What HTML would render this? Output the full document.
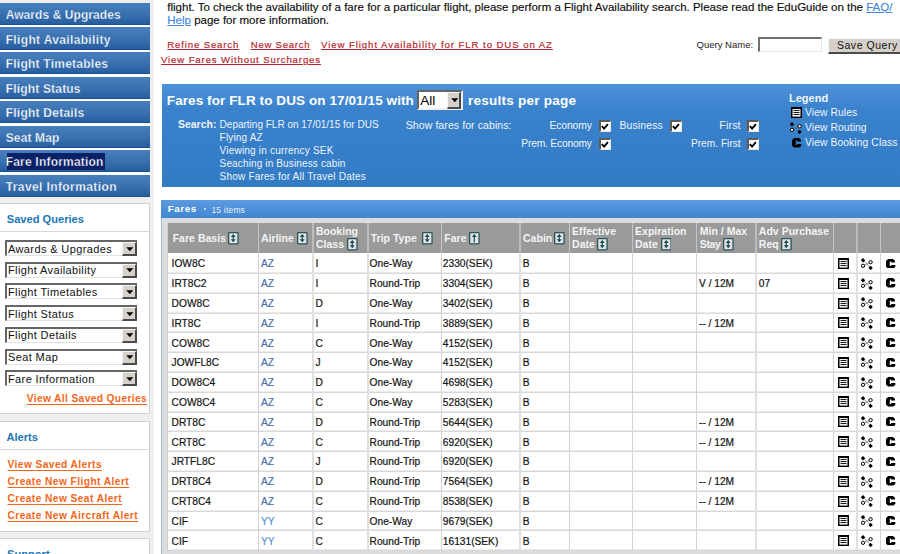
<!DOCTYPE html><html><head><meta charset="utf-8"><style>
*{margin:0;padding:0}
html,body{width:900px;height:554px;overflow:hidden;background:#fff}
body{position:relative;font-family:"Liberation Sans",sans-serif}
body>div{position:absolute}
.t{white-space:pre;line-height:1}
.t u{text-decoration-thickness:1px;text-underline-offset:1.5px}
.rl u{text-underline-offset:1px}
.rl{-webkit-text-stroke:0.2px #b3282d}
.t u.hl{color:#4287dc;text-underline-offset:1px;-webkit-text-stroke:0.15px #4287dc}
svg{display:block}
.sel{background:#fff;border-top:2px solid #666;border-left:2px solid #666;border-bottom:1px solid #e2e2e2;box-sizing:border-box}
.sel .st{position:absolute;left:1px;top:0.6px;font-size:11px;line-height:12px;color:#111;letter-spacing:0.38px;white-space:pre}
.sel .sb{position:absolute;right:0;top:0;width:14.8px;height:14px;background:#d5d1ca;border-style:solid;border-width:1px 2px 2px 1px;border-color:#f6f5f2 #4a4a4a #4a4a4a #f6f5f2;box-sizing:border-box}
.sel .sb i{position:absolute;left:2.5px;top:3.5px;width:0;height:0;border-left:3.5px solid transparent;border-right:3.5px solid transparent;border-top:4px solid #000}
.sel2{background:#fff;border-style:solid;border-width:2px;border-color:#666 #f0f0f0 #f0f0f0 #666;box-sizing:border-box}
.sel2 .st2{position:absolute;left:1px;top:1.5px;font-size:13.5px;line-height:15px;color:#000;white-space:pre}
.sel2 .sb2{position:absolute;right:0;top:0;width:14.7px;height:17.3px;background:#d5d1ca;border-style:solid;border-width:1px 2px 2px 1px;border-color:#f6f5f2 #4a4a4a #4a4a4a #f6f5f2;box-sizing:border-box}
.sel2 .sb2 i{position:absolute;left:2.8px;top:6px;width:0;height:0;border-left:3.3px solid transparent;border-right:3.3px solid transparent;border-top:3.9px solid #000}
.cb{width:12.2px;height:12px;background:#fff;border-style:solid;border-width:2px 1px 1px 2px;border-color:#5d5a55 #e8e6e0 #e8e6e0 #5d5a55;box-sizing:border-box}
.cb svg{position:absolute;left:0.2px;top:0.4px}
</style></head><body>
<div style="left:0px;top:0px;width:153.5px;height:554px;background:#efefef"></div>
<div style="left:0px;top:2.9px;width:150px;height:22.2px;background:linear-gradient(#4780bc,#3b73b2 45%,#255c9f);box-shadow:inset 0 -1px 0 #1c4f92"></div>
<div style="left:0px;top:25.1px;width:150px;height:2.36px;background:#fafcff"></div>
<div class="t " style="left:5.7px;top:9.0px;font-size:12px;color:#fff;font-weight:bold;letter-spacing:0.07px;-webkit-text-stroke:0.35px rgba(58,112,176,0.9)">Awards &amp; Upgrades</div>
<div style="left:0px;top:27.46px;width:150px;height:22.2px;background:linear-gradient(#4780bc,#3b73b2 45%,#255c9f);box-shadow:inset 0 -1px 0 #1c4f92"></div>
<div style="left:0px;top:49.66px;width:150px;height:2.36px;background:#fafcff"></div>
<div class="t " style="left:5.7px;top:33.56px;font-size:12px;color:#fff;font-weight:bold;letter-spacing:0.35px;-webkit-text-stroke:0.35px rgba(58,112,176,0.9)">Flight Availability</div>
<div style="left:0px;top:52.02px;width:150px;height:22.2px;background:linear-gradient(#4780bc,#3b73b2 45%,#255c9f);box-shadow:inset 0 -1px 0 #1c4f92"></div>
<div style="left:0px;top:74.22px;width:150px;height:2.36px;background:#fafcff"></div>
<div class="t " style="left:5.7px;top:58.12px;font-size:12px;color:#fff;font-weight:bold;letter-spacing:0.24px;-webkit-text-stroke:0.35px rgba(58,112,176,0.9)">Flight Timetables</div>
<div style="left:0px;top:76.58px;width:150px;height:22.2px;background:linear-gradient(#4780bc,#3b73b2 45%,#255c9f);box-shadow:inset 0 -1px 0 #1c4f92"></div>
<div style="left:0px;top:98.78px;width:150px;height:2.36px;background:#fafcff"></div>
<div class="t " style="left:5.7px;top:82.68px;font-size:12px;color:#fff;font-weight:bold;letter-spacing:0.18px;-webkit-text-stroke:0.35px rgba(58,112,176,0.9)">Flight Status</div>
<div style="left:0px;top:101.14px;width:150px;height:22.2px;background:linear-gradient(#4780bc,#3b73b2 45%,#255c9f);box-shadow:inset 0 -1px 0 #1c4f92"></div>
<div style="left:0px;top:123.34px;width:150px;height:2.36px;background:#fafcff"></div>
<div class="t " style="left:5.7px;top:107.24px;font-size:12px;color:#fff;font-weight:bold;letter-spacing:0.24px;-webkit-text-stroke:0.35px rgba(58,112,176,0.9)">Flight Details</div>
<div style="left:0px;top:125.7px;width:150px;height:22.2px;background:linear-gradient(#4780bc,#3b73b2 45%,#255c9f);box-shadow:inset 0 -1px 0 #1c4f92"></div>
<div style="left:0px;top:147.9px;width:150px;height:2.36px;background:#fafcff"></div>
<div class="t " style="left:5.7px;top:131.8px;font-size:12px;color:#fff;font-weight:bold;letter-spacing:0.15px;-webkit-text-stroke:0.35px rgba(58,112,176,0.9)">Seat Map</div>
<div style="left:0px;top:150.26px;width:150px;height:22.2px;background:linear-gradient(#4780bc,#3b73b2 45%,#255c9f);box-shadow:inset 0 -1px 0 #1c4f92"></div>
<div style="left:0px;top:172.46px;width:150px;height:2.36px;background:#fafcff"></div>
<div style="left:6.7px;top:152.96px;width:98.2px;height:16.9px;background:#0b2167"></div>
<div class="t " style="left:5.7px;top:156.36px;font-size:12px;color:#fff;font-weight:bold;letter-spacing:0.2px;-webkit-text-stroke:0.35px rgba(11,33,103,0.9)">Fare Information</div>
<div style="left:0px;top:174.82px;width:150px;height:22.2px;background:linear-gradient(#4780bc,#3b73b2 45%,#255c9f);box-shadow:inset 0 -1px 0 #1c4f92"></div>
<div class="t " style="left:5.7px;top:180.92px;font-size:12px;color:#fff;font-weight:bold;letter-spacing:0.4px;-webkit-text-stroke:0.35px rgba(58,112,176,0.9)">Travel Information</div>
<div style="left:0px;top:203px;width:149.5px;height:211px;background:#fff;border-top:1px solid #d0d0d0;border-right:1px solid #d0d0d0;border-bottom:1px solid #d0d0d0;box-sizing:border-box"></div>
<div class="t " style="left:6.8px;top:214px;font-size:11.1px;color:#1b76b6;font-weight:bold;">Saved Queries</div>
<div style="left:0px;top:231px;width:149px;height:1px;background:#d8d8d8"></div>
<div class="sel" style="left:5px;top:240.0px;width:132px;height:16px"><span class="st">Awards &amp; Upgrades</span><span class="sb"><svg width="8" height="5" viewBox="0 0 8 5" style="position:absolute;left:2.6px;top:3.6px"><path d="M0.3 0.2 H7.3 L3.8 4.2Z" fill="#000"/></svg></span></div>
<div class="sel" style="left:5px;top:261.7px;width:132px;height:16px"><span class="st">Flight Availability</span><span class="sb"><svg width="8" height="5" viewBox="0 0 8 5" style="position:absolute;left:2.6px;top:3.6px"><path d="M0.3 0.2 H7.3 L3.8 4.2Z" fill="#000"/></svg></span></div>
<div class="sel" style="left:5px;top:283.4px;width:132px;height:16px"><span class="st">Flight Timetables</span><span class="sb"><svg width="8" height="5" viewBox="0 0 8 5" style="position:absolute;left:2.6px;top:3.6px"><path d="M0.3 0.2 H7.3 L3.8 4.2Z" fill="#000"/></svg></span></div>
<div class="sel" style="left:5px;top:305.1px;width:132px;height:16px"><span class="st">Flight Status</span><span class="sb"><svg width="8" height="5" viewBox="0 0 8 5" style="position:absolute;left:2.6px;top:3.6px"><path d="M0.3 0.2 H7.3 L3.8 4.2Z" fill="#000"/></svg></span></div>
<div class="sel" style="left:5px;top:326.8px;width:132px;height:16px"><span class="st">Flight Details</span><span class="sb"><svg width="8" height="5" viewBox="0 0 8 5" style="position:absolute;left:2.6px;top:3.6px"><path d="M0.3 0.2 H7.3 L3.8 4.2Z" fill="#000"/></svg></span></div>
<div class="sel" style="left:5px;top:348.5px;width:132px;height:16px"><span class="st">Seat Map</span><span class="sb"><svg width="8" height="5" viewBox="0 0 8 5" style="position:absolute;left:2.6px;top:3.6px"><path d="M0.3 0.2 H7.3 L3.8 4.2Z" fill="#000"/></svg></span></div>
<div class="sel" style="left:5px;top:370.2px;width:132px;height:16px"><span class="st">Fare Information</span><span class="sb"><svg width="8" height="5" viewBox="0 0 8 5" style="position:absolute;left:2.6px;top:3.6px"><path d="M0.3 0.2 H7.3 L3.8 4.2Z" fill="#000"/></svg></span></div>
<div class="t " style="left:26.7px;top:394.2px;font-size:10.2px;color:#f4661b;font-weight:bold;letter-spacing:0.38px;"><u>View All Saved Queries</u></div>
<div style="left:0px;top:421.2px;width:149.5px;height:110.6px;background:#fff;border-top:1px solid #d0d0d0;border-right:1px solid #d0d0d0;border-bottom:1px solid #d0d0d0;box-sizing:border-box"></div>
<div class="t " style="left:6.5px;top:432px;font-size:11.1px;color:#1b76b6;font-weight:bold;">Alerts</div>
<div style="left:0px;top:449px;width:149px;height:1px;background:#d8d8d8"></div>
<div class="t " style="left:7.5px;top:459.8px;font-size:10.2px;color:#f4661b;font-weight:bold;letter-spacing:0.43px;"><u>View Saved Alerts</u></div>
<div class="t " style="left:7.5px;top:476.7px;font-size:10.2px;color:#f4661b;font-weight:bold;letter-spacing:0.43px;"><u>Create New Flight Alert</u></div>
<div class="t " style="left:7.5px;top:493.6px;font-size:10.2px;color:#f4661b;font-weight:bold;letter-spacing:0.43px;"><u>Create New Seat Alert</u></div>
<div class="t " style="left:7.5px;top:510.5px;font-size:10.2px;color:#f4661b;font-weight:bold;letter-spacing:0.43px;"><u>Create New Aircraft Alert</u></div>
<div style="left:0px;top:537.8px;width:149.5px;height:30px;background:#fff;border-top:1px solid #d0d0d0;border-right:1px solid #d0d0d0;box-sizing:border-box"></div>
<div class="t " style="left:7.1px;top:549px;font-size:11.1px;color:#1b76b6;font-weight:bold;">Support</div>
<div class="t " style="left:167.3px;top:1.6px;font-size:11.5px;color:#0d0d0d;-webkit-text-stroke:0.15px #0d0d0d">flight. To check the availability of a fare for a particular flight, please perform a Flight Availability search. Please read the EduGuide on the <u class="hl">FAQ/</u></div>
<div class="t " style="left:167.3px;top:15px;font-size:11.5px;color:#0d0d0d;-webkit-text-stroke:0.15px #0d0d0d"><u class="hl">Help</u> page for more information.</div>
<div class="t rl" style="left:167.3px;top:40px;font-size:9.6px;color:#b3282d;letter-spacing:0.85px;font-weight:500"><u>Refine Search</u></div>
<div class="t rl" style="left:250.8px;top:40px;font-size:9.6px;color:#b3282d;letter-spacing:0.72px;"><u>New Search</u></div>
<div class="t rl" style="left:321px;top:40px;font-size:9.6px;color:#b3282d;letter-spacing:0.93px;"><u>View Flight Availability for FLR to DUS on AZ</u></div>
<div class="t rl" style="left:161px;top:55px;font-size:9.6px;color:#b3282d;letter-spacing:0.87px;"><u>View Fares Without Surcharges</u></div>
<div class="t " style="left:696.6px;top:40.3px;font-size:9.5px;color:#222;">Query Name:</div>
<div style="left:757.8px;top:37.3px;width:64.5px;height:15.2px;background:#fff;border-style:solid;border-width:2px 1px 1px 2px;border-color:#707070 #e4e4e4 #e4e4e4 #707070;box-sizing:border-box"></div>
<div style="left:828.4px;top:38px;width:90px;height:15.7px;background:#d5d1ca;border-style:solid;border-width:1px 2px 2px 1px;border-color:#f8f8f8 #4a4a4a #4a4a4a #f8f8f8;box-sizing:border-box"></div>
<div class="t " style="left:836.9px;top:39.8px;font-size:10.5px;color:#111;letter-spacing:0.55px;">Save Query</div>
<div style="left:161.6px;top:83.9px;width:740px;height:102.9px;background:linear-gradient(#4d93db,#3b82cd 25%,#367ec8 60%,#337cc4)"></div>
<div class="t " style="left:166.8px;top:93.5px;font-size:13.5px;color:#fff;font-weight:bold;letter-spacing:0.09px;">Fares for FLR to DUS on 17/01/15 with</div>
<div class="sel2" style="left:417.3px;top:89.6px;width:46px;height:20.7px"><span class="st2">All</span><span class="sb2"><svg width="8" height="5" viewBox="0 0 8 5" style="position:absolute;left:2.9px;top:5.8px"><path d="M0.3 0.2 H7.3 L3.8 4.2Z" fill="#000"/></svg></span></div>
<div class="t " style="left:468px;top:93.5px;font-size:13.5px;color:#fff;font-weight:bold;letter-spacing:0.25px;">results per page</div>
<div class="t " style="left:177.9px;top:118.6px;font-size:10.5px;color:#eef4fb;font-weight:bold;">Search:</div>
<div class="t " style="left:219.6px;top:119.6px;font-size:10px;color:#eef4fb;">Departing FLR on 17/01/15 for DUS</div>
<div class="t " style="left:219.6px;top:132.7px;font-size:10px;color:#eef4fb;letter-spacing:0.18px;">Flying AZ</div>
<div class="t " style="left:219.6px;top:145.8px;font-size:10px;color:#eef4fb;letter-spacing:0.2px;">Viewing in currency SEK</div>
<div class="t " style="left:219.6px;top:158.9px;font-size:10px;color:#eef4fb;letter-spacing:0.14px;">Seaching in Business cabin</div>
<div class="t " style="left:219.6px;top:172.0px;font-size:10px;color:#eef4fb;letter-spacing:0.2px;">Show Fares for All Travel Dates</div>
<div class="t " style="left:405.7px;top:120.3px;font-size:10.6px;color:#eef4fb;letter-spacing:0.05px;">Show fares for cabins:</div>
<div class="t" style="right:308.3px;top:121.3px;font-size:10.4px;color:#eef4fb;letter-spacing:-0.15px;">Economy</div>
<div class="cb" style="left:598.9px;top:120.4px"><svg width="9" height="9" viewBox="0 0 9 9"><path d="M0.8 3.2 L3.1 5.6 L6.9 1.2" stroke="#000" stroke-width="1.9" fill="none"/></svg></div>
<div class="t " style="left:619.5px;top:121.3px;font-size:10.4px;color:#eef4fb;letter-spacing:0.15px;">Business</div>
<div class="cb" style="left:669.6px;top:120.4px"><svg width="9" height="9" viewBox="0 0 9 9"><path d="M0.8 3.2 L3.1 5.6 L6.9 1.2" stroke="#000" stroke-width="1.9" fill="none"/></svg></div>
<div class="t" style="right:159.3px;top:120.3px;font-size:10.6px;color:#eef4fb;letter-spacing:0.15px;">First</div>
<div class="cb" style="left:747.3px;top:120.4px"><svg width="9" height="9" viewBox="0 0 9 9"><path d="M0.8 3.2 L3.1 5.6 L6.9 1.2" stroke="#000" stroke-width="1.9" fill="none"/></svg></div>
<div class="t" style="right:308.3px;top:139.1px;font-size:10.3px;color:#eef4fb;letter-spacing:-0.22px;">Prem. Economy</div>
<div class="cb" style="left:598.9px;top:138.2px"><svg width="9" height="9" viewBox="0 0 9 9"><path d="M0.8 3.2 L3.1 5.6 L6.9 1.2" stroke="#000" stroke-width="1.9" fill="none"/></svg></div>
<div class="t" style="right:159.3px;top:139.1px;font-size:10.2px;color:#eef4fb;">Prem. First</div>
<div class="cb" style="left:747.3px;top:138.2px"><svg width="9" height="9" viewBox="0 0 9 9"><path d="M0.8 3.2 L3.1 5.6 L6.9 1.2" stroke="#000" stroke-width="1.9" fill="none"/></svg></div>
<div class="t " style="left:789px;top:93px;font-size:11px;color:#eef4fb;font-weight:bold;">Legend</div>
<div class="t " style="left:805px;top:108px;font-size:10.3px;color:#eef4fb;letter-spacing:0.1px;">View Rules</div>
<div class="t " style="left:805px;top:123px;font-size:10.3px;color:#eef4fb;letter-spacing:0.1px;">View Routing</div>
<div class="t " style="left:805px;top:138.3px;font-size:10.3px;color:#eef4fb;letter-spacing:0.1px;">View Booking Class</div>
<div style="left:161.3px;top:199.9px;width:740px;height:17.8px;background:linear-gradient(#5b9ae0,#3f86d2)"></div>
<div class="t " style="left:167.8px;top:204.1px;font-size:9.8px;color:#fff;font-weight:bold;letter-spacing:0.55px;">Fares</div>
<div style="left:204.3px;top:208.3px;width:2px;height:2px;background:#e8f0fa;border-radius:1px"></div>
<div class="t " style="left:211.4px;top:206.1px;font-size:8.4px;color:#e8f0fa;letter-spacing:0.25px;">15 items</div>
<div style="left:161.3px;top:217.7px;width:740px;height:340px;background:#dcdcdc;box-shadow:inset 1px 0 0 #9bbbe0"></div>
<div style="left:167.8px;top:223.2px;width:740px;height:29.6px;background:#9a9a9a"></div>
<div style="left:258px;top:223.2px;width:1px;height:29.6px;background:#c6c6c6"></div>
<div style="left:312px;top:223.2px;width:2px;height:29.6px;background:#bdbdbd"></div>
<div style="left:367px;top:223.2px;width:2px;height:29.6px;background:#bdbdbd"></div>
<div style="left:441px;top:223.2px;width:1px;height:29.6px;background:#c6c6c6"></div>
<div style="left:519px;top:223.2px;width:2px;height:29.6px;background:#bdbdbd"></div>
<div style="left:569px;top:223.2px;width:1px;height:29.6px;background:#c6c6c6"></div>
<div style="left:632px;top:223.2px;width:1px;height:29.6px;background:#c6c6c6"></div>
<div style="left:696px;top:223.2px;width:1px;height:29.6px;background:#c6c6c6"></div>
<div style="left:755px;top:223.2px;width:2px;height:29.6px;background:#bdbdbd"></div>
<div style="left:833px;top:223.2px;width:1px;height:29.6px;background:#c6c6c6"></div>
<div style="left:856px;top:223.2px;width:2px;height:29.6px;background:#bdbdbd"></div>
<div style="left:880px;top:223.2px;width:1px;height:29.6px;background:#c6c6c6"></div>
<div class="t " style="left:172.7px;top:232.7px;font-size:10.5px;color:#f4f4f4;font-weight:bold;letter-spacing:0.02px;">Fare Basis</div>
<div style="left:228.3px;top:232.0px;width:10.7px;height:12.5px"><svg width="10.7" height="12.5" viewBox="0 0 10.7 12.5"><rect x="0.65" y="0.65" width="9.4" height="11.2" rx="0.7" fill="#e2e2ea" stroke="#2b5656" stroke-width="1.3"/><path d="M5.25 1.9 L7.7 4.9 H5.85 V7.3 H7.7 L5.25 10.2 L2.8 7.3 H4.65 V4.9 H2.8 Z" fill="#184a4a"/></svg></div>
<div class="t " style="left:261px;top:232.7px;font-size:10.5px;color:#f4f4f4;font-weight:bold;letter-spacing:0.02px;">Airline</div>
<div style="left:297.0px;top:232.0px;width:10.7px;height:12.5px"><svg width="10.7" height="12.5" viewBox="0 0 10.7 12.5"><rect x="0.65" y="0.65" width="9.4" height="11.2" rx="0.7" fill="#e2e2ea" stroke="#2b5656" stroke-width="1.3"/><path d="M5.25 1.9 L7.7 4.9 H5.85 V7.3 H7.7 L5.25 10.2 L2.8 7.3 H4.65 V4.9 H2.8 Z" fill="#184a4a"/></svg></div>
<div class="t " style="left:315.9px;top:225.7px;font-size:10.5px;color:#f4f4f4;font-weight:bold;letter-spacing:0.02px;">Booking</div>
<div class="t " style="left:315.9px;top:238.7px;font-size:10.5px;color:#f4f4f4;font-weight:bold;letter-spacing:0.02px;">Class</div>
<div style="left:347.3px;top:238.3px;width:10.7px;height:12.5px"><svg width="10.7" height="12.5" viewBox="0 0 10.7 12.5"><rect x="0.65" y="0.65" width="9.4" height="11.2" rx="0.7" fill="#e2e2ea" stroke="#2b5656" stroke-width="1.3"/><path d="M5.25 1.9 L7.7 4.9 H5.85 V7.3 H7.7 L5.25 10.2 L2.8 7.3 H4.65 V4.9 H2.8 Z" fill="#184a4a"/></svg></div>
<div class="t " style="left:370.7px;top:232.7px;font-size:10.5px;color:#f4f4f4;font-weight:bold;letter-spacing:0.02px;">Trip Type</div>
<div style="left:422.2px;top:232.0px;width:10.7px;height:12.5px"><svg width="10.7" height="12.5" viewBox="0 0 10.7 12.5"><rect x="0.65" y="0.65" width="9.4" height="11.2" rx="0.7" fill="#e2e2ea" stroke="#2b5656" stroke-width="1.3"/><path d="M5.25 1.9 L7.7 4.9 H5.85 V7.3 H7.7 L5.25 10.2 L2.8 7.3 H4.65 V4.9 H2.8 Z" fill="#184a4a"/></svg></div>
<div class="t " style="left:444.3px;top:232.7px;font-size:10.5px;color:#f4f4f4;font-weight:bold;letter-spacing:0.02px;">Fare</div>
<div style="left:469.2px;top:232.0px;width:10.7px;height:12.5px"><svg width="10.7" height="12.5" viewBox="0 0 10.7 12.5"><rect x="0.65" y="0.65" width="9.4" height="11.2" rx="0.7" fill="#e2e2ea" stroke="#2b5656" stroke-width="1.3"/><path d="M5.3 1.9 L7.7 4.9 H5.9 V10.4 H4.7 V4.9 H2.9 Z" fill="#184a4a"/></svg></div>
<div class="t " style="left:523px;top:232.7px;font-size:10.5px;color:#f4f4f4;font-weight:bold;letter-spacing:0.02px;">Cabin</div>
<div style="left:554.2px;top:232.0px;width:10.7px;height:12.5px"><svg width="10.7" height="12.5" viewBox="0 0 10.7 12.5"><rect x="0.65" y="0.65" width="9.4" height="11.2" rx="0.7" fill="#e2e2ea" stroke="#2b5656" stroke-width="1.3"/><path d="M5.25 1.9 L7.7 4.9 H5.85 V7.3 H7.7 L5.25 10.2 L2.8 7.3 H4.65 V4.9 H2.8 Z" fill="#184a4a"/></svg></div>
<div class="t " style="left:572.1px;top:225.7px;font-size:10.5px;color:#f4f4f4;font-weight:bold;letter-spacing:0.02px;">Effective</div>
<div class="t " style="left:572.1px;top:238.7px;font-size:10.5px;color:#f4f4f4;font-weight:bold;letter-spacing:0.02px;">Date</div>
<div style="left:597.3px;top:238.3px;width:10.7px;height:12.5px"><svg width="10.7" height="12.5" viewBox="0 0 10.7 12.5"><rect x="0.65" y="0.65" width="9.4" height="11.2" rx="0.7" fill="#e2e2ea" stroke="#2b5656" stroke-width="1.3"/><path d="M5.25 1.9 L7.7 4.9 H5.85 V7.3 H7.7 L5.25 10.2 L2.8 7.3 H4.65 V4.9 H2.8 Z" fill="#184a4a"/></svg></div>
<div class="t " style="left:635px;top:225.7px;font-size:10.5px;color:#f4f4f4;font-weight:bold;letter-spacing:0.02px;">Expiration</div>
<div class="t " style="left:635px;top:238.7px;font-size:10.5px;color:#f4f4f4;font-weight:bold;letter-spacing:0.02px;">Date</div>
<div style="left:660.8px;top:238.3px;width:10.7px;height:12.5px"><svg width="10.7" height="12.5" viewBox="0 0 10.7 12.5"><rect x="0.65" y="0.65" width="9.4" height="11.2" rx="0.7" fill="#e2e2ea" stroke="#2b5656" stroke-width="1.3"/><path d="M5.25 1.9 L7.7 4.9 H5.85 V7.3 H7.7 L5.25 10.2 L2.8 7.3 H4.65 V4.9 H2.8 Z" fill="#184a4a"/></svg></div>
<div class="t " style="left:699.8px;top:225.7px;font-size:10.5px;color:#f4f4f4;font-weight:bold;letter-spacing:0.02px;">Min / Max</div>
<div class="t " style="left:699.8px;top:238.7px;font-size:10.5px;color:#f4f4f4;font-weight:bold;letter-spacing:-0.35px;">Stay</div>
<div style="left:723.2px;top:238.3px;width:10.7px;height:12.5px"><svg width="10.7" height="12.5" viewBox="0 0 10.7 12.5"><rect x="0.65" y="0.65" width="9.4" height="11.2" rx="0.7" fill="#e2e2ea" stroke="#2b5656" stroke-width="1.3"/><path d="M5.25 1.9 L7.7 4.9 H5.85 V7.3 H7.7 L5.25 10.2 L2.8 7.3 H4.65 V4.9 H2.8 Z" fill="#184a4a"/></svg></div>
<div class="t " style="left:758.8px;top:225.7px;font-size:10.5px;color:#f4f4f4;font-weight:bold;letter-spacing:0.02px;">Adv Purchase</div>
<div class="t " style="left:758.8px;top:238.7px;font-size:10.5px;color:#f4f4f4;font-weight:bold;letter-spacing:0.02px;">Req</div>
<div style="left:781px;top:238.3px;width:10.7px;height:12.5px"><svg width="10.7" height="12.5" viewBox="0 0 10.7 12.5"><rect x="0.65" y="0.65" width="9.4" height="11.2" rx="0.7" fill="#e2e2ea" stroke="#2b5656" stroke-width="1.3"/><path d="M5.25 1.9 L7.7 4.9 H5.85 V7.3 H7.7 L5.25 10.2 L2.8 7.3 H4.65 V4.9 H2.8 Z" fill="#184a4a"/></svg></div>
<div style="left:167.8px;top:252.8px;width:740px;height:297.0px;background:#fff"></div>
<div style="left:167.8px;top:272px;width:740px;height:1px;background:#ececec"></div>
<div style="left:167.8px;top:273px;width:740px;height:1px;background:#d8d8d8"></div>
<div class="t " style="left:171.6px;top:259.4px;font-size:10.2px;color:#141414;-webkit-text-stroke:0.2px #141414">IOW8C</div>
<div class="t " style="left:261.0px;top:259.4px;font-size:10.2px;color:#4a6fa8;-webkit-text-stroke:0.2px #4a6fa8">AZ</div>
<div class="t " style="left:315.4px;top:259.4px;font-size:10.2px;color:#141414;-webkit-text-stroke:0.2px #141414">I</div>
<div class="t " style="left:369.6px;top:259.4px;font-size:10.2px;color:#141414;-webkit-text-stroke:0.2px #141414">One-Way</div>
<div class="t " style="left:442.8px;top:259.4px;font-size:10.2px;color:#141414;-webkit-text-stroke:0.2px #141414">2330(SEK)</div>
<div class="t " style="left:522.8px;top:259.4px;font-size:10.2px;color:#141414;-webkit-text-stroke:0.2px #141414">B</div>
<div style="left:838px;top:258px;width:11px;height:11px"><svg width="11" height="11" viewBox="0 0 11 11"><rect x="0" y="0" width="11" height="11" fill="#000"/><rect x="1.5" y="2" width="8" height="7.6" fill="#f2f2f2"/><rect x="2.5" y="3" width="6" height="1" fill="#1a1a1a"/><rect x="2.5" y="5" width="6" height="1" fill="#1a1a1a"/><rect x="2.5" y="7" width="6" height="1" fill="#1a1a1a"/></svg></div>
<div style="left:861.3px;top:257.7px;width:12px;height:12px"><svg width="12" height="12" viewBox="0 0 12 12"><path d="M2 2.2 L9.6 9.9 M2 7.8 L9.6 4.2" stroke="#666" stroke-width="0.7"/><path d="M2 0 L4.2 2.2 L2 4.4 L-0.2 2.2Z M9.6 7.7 L11.8 9.9 L9.6 12.1 L7.4 9.9Z" fill="#000"/><circle cx="9.6" cy="4.2" r="1.65" fill="#fff" stroke="#000" stroke-width="1"/><circle cx="2" cy="7.8" r="1.65" fill="#fff" stroke="#000" stroke-width="1"/></svg></div>
<div style="left:886px;top:258.5px;width:10px;height:9.6px"><svg width="10" height="9.6" viewBox="0 0 10 9.6"><path d="M2.1 0 H6.9 L9 1.7 V3.5 H5.1 V2.6 H3.8 V7.1 H5.1 V6.0 H9.3 V7.9 L7.3 9.6 H2.1 L0 7.7 V1.9 Z" fill="#000"/></svg></div>
<div style="left:167.8px;top:292px;width:740px;height:1px;background:#ececec"></div>
<div style="left:167.8px;top:293px;width:740px;height:1px;background:#d8d8d8"></div>
<div class="t " style="left:171.6px;top:279.2px;font-size:10.2px;color:#141414;-webkit-text-stroke:0.2px #141414">IRT8C2</div>
<div class="t " style="left:261.0px;top:279.2px;font-size:10.2px;color:#4a6fa8;-webkit-text-stroke:0.2px #4a6fa8">AZ</div>
<div class="t " style="left:315.4px;top:279.2px;font-size:10.2px;color:#141414;-webkit-text-stroke:0.2px #141414">I</div>
<div class="t " style="left:369.6px;top:279.2px;font-size:10.2px;color:#141414;-webkit-text-stroke:0.2px #141414">Round-Trip</div>
<div class="t " style="left:442.8px;top:279.2px;font-size:10.2px;color:#141414;-webkit-text-stroke:0.2px #141414">3304(SEK)</div>
<div class="t " style="left:522.8px;top:279.2px;font-size:10.2px;color:#141414;-webkit-text-stroke:0.2px #141414">B</div>
<div class="t " style="left:699.0px;top:279.2px;font-size:10.2px;color:#141414;-webkit-text-stroke:0.2px #141414">V / 12M</div>
<div class="t " style="left:758.8px;top:279.2px;font-size:10.2px;color:#141414;-webkit-text-stroke:0.2px #141414">07</div>
<div style="left:838px;top:278px;width:11px;height:11px"><svg width="11" height="11" viewBox="0 0 11 11"><rect x="0" y="0" width="11" height="11" fill="#000"/><rect x="1.5" y="2" width="8" height="7.6" fill="#f2f2f2"/><rect x="2.5" y="3" width="6" height="1" fill="#1a1a1a"/><rect x="2.5" y="5" width="6" height="1" fill="#1a1a1a"/><rect x="2.5" y="7" width="6" height="1" fill="#1a1a1a"/></svg></div>
<div style="left:861.3px;top:277.5px;width:12px;height:12px"><svg width="12" height="12" viewBox="0 0 12 12"><path d="M2 2.2 L9.6 9.9 M2 7.8 L9.6 4.2" stroke="#666" stroke-width="0.7"/><path d="M2 0 L4.2 2.2 L2 4.4 L-0.2 2.2Z M9.6 7.7 L11.8 9.9 L9.6 12.1 L7.4 9.9Z" fill="#000"/><circle cx="9.6" cy="4.2" r="1.65" fill="#fff" stroke="#000" stroke-width="1"/><circle cx="2" cy="7.8" r="1.65" fill="#fff" stroke="#000" stroke-width="1"/></svg></div>
<div style="left:886px;top:278.3px;width:10px;height:9.6px"><svg width="10" height="9.6" viewBox="0 0 10 9.6"><path d="M2.1 0 H6.9 L9 1.7 V3.5 H5.1 V2.6 H3.8 V7.1 H5.1 V6.0 H9.3 V7.9 L7.3 9.6 H2.1 L0 7.7 V1.9 Z" fill="#000"/></svg></div>
<div style="left:167.8px;top:312px;width:740px;height:1px;background:#ececec"></div>
<div style="left:167.8px;top:313px;width:740px;height:1px;background:#d8d8d8"></div>
<div class="t " style="left:171.6px;top:299px;font-size:10.2px;color:#141414;-webkit-text-stroke:0.2px #141414">DOW8C</div>
<div class="t " style="left:261.0px;top:299px;font-size:10.2px;color:#4a6fa8;-webkit-text-stroke:0.2px #4a6fa8">AZ</div>
<div class="t " style="left:315.4px;top:299px;font-size:10.2px;color:#141414;-webkit-text-stroke:0.2px #141414">D</div>
<div class="t " style="left:369.6px;top:299px;font-size:10.2px;color:#141414;-webkit-text-stroke:0.2px #141414">One-Way</div>
<div class="t " style="left:442.8px;top:299px;font-size:10.2px;color:#141414;-webkit-text-stroke:0.2px #141414">3402(SEK)</div>
<div class="t " style="left:522.8px;top:299px;font-size:10.2px;color:#141414;-webkit-text-stroke:0.2px #141414">B</div>
<div style="left:838px;top:298px;width:11px;height:11px"><svg width="11" height="11" viewBox="0 0 11 11"><rect x="0" y="0" width="11" height="11" fill="#000"/><rect x="1.5" y="2" width="8" height="7.6" fill="#f2f2f2"/><rect x="2.5" y="3" width="6" height="1" fill="#1a1a1a"/><rect x="2.5" y="5" width="6" height="1" fill="#1a1a1a"/><rect x="2.5" y="7" width="6" height="1" fill="#1a1a1a"/></svg></div>
<div style="left:861.3px;top:297.3px;width:12px;height:12px"><svg width="12" height="12" viewBox="0 0 12 12"><path d="M2 2.2 L9.6 9.9 M2 7.8 L9.6 4.2" stroke="#666" stroke-width="0.7"/><path d="M2 0 L4.2 2.2 L2 4.4 L-0.2 2.2Z M9.6 7.7 L11.8 9.9 L9.6 12.1 L7.4 9.9Z" fill="#000"/><circle cx="9.6" cy="4.2" r="1.65" fill="#fff" stroke="#000" stroke-width="1"/><circle cx="2" cy="7.8" r="1.65" fill="#fff" stroke="#000" stroke-width="1"/></svg></div>
<div style="left:886px;top:298.1px;width:10px;height:9.6px"><svg width="10" height="9.6" viewBox="0 0 10 9.6"><path d="M2.1 0 H6.9 L9 1.7 V3.5 H5.1 V2.6 H3.8 V7.1 H5.1 V6.0 H9.3 V7.9 L7.3 9.6 H2.1 L0 7.7 V1.9 Z" fill="#000"/></svg></div>
<div style="left:167.8px;top:331px;width:740px;height:1px;background:#ececec"></div>
<div style="left:167.8px;top:332px;width:740px;height:1px;background:#d8d8d8"></div>
<div class="t " style="left:171.6px;top:318.8px;font-size:10.2px;color:#141414;-webkit-text-stroke:0.2px #141414">IRT8C</div>
<div class="t " style="left:261.0px;top:318.8px;font-size:10.2px;color:#4a6fa8;-webkit-text-stroke:0.2px #4a6fa8">AZ</div>
<div class="t " style="left:315.4px;top:318.8px;font-size:10.2px;color:#141414;-webkit-text-stroke:0.2px #141414">I</div>
<div class="t " style="left:369.6px;top:318.8px;font-size:10.2px;color:#141414;-webkit-text-stroke:0.2px #141414">Round-Trip</div>
<div class="t " style="left:442.8px;top:318.8px;font-size:10.2px;color:#141414;-webkit-text-stroke:0.2px #141414">3889(SEK)</div>
<div class="t " style="left:522.8px;top:318.8px;font-size:10.2px;color:#141414;-webkit-text-stroke:0.2px #141414">B</div>
<div class="t " style="left:699.0px;top:318.8px;font-size:10.2px;color:#141414;-webkit-text-stroke:0.2px #141414">-- / 12M</div>
<div style="left:838px;top:317px;width:11px;height:11px"><svg width="11" height="11" viewBox="0 0 11 11"><rect x="0" y="0" width="11" height="11" fill="#000"/><rect x="1.5" y="2" width="8" height="7.6" fill="#f2f2f2"/><rect x="2.5" y="3" width="6" height="1" fill="#1a1a1a"/><rect x="2.5" y="5" width="6" height="1" fill="#1a1a1a"/><rect x="2.5" y="7" width="6" height="1" fill="#1a1a1a"/></svg></div>
<div style="left:861.3px;top:317.1px;width:12px;height:12px"><svg width="12" height="12" viewBox="0 0 12 12"><path d="M2 2.2 L9.6 9.9 M2 7.8 L9.6 4.2" stroke="#666" stroke-width="0.7"/><path d="M2 0 L4.2 2.2 L2 4.4 L-0.2 2.2Z M9.6 7.7 L11.8 9.9 L9.6 12.1 L7.4 9.9Z" fill="#000"/><circle cx="9.6" cy="4.2" r="1.65" fill="#fff" stroke="#000" stroke-width="1"/><circle cx="2" cy="7.8" r="1.65" fill="#fff" stroke="#000" stroke-width="1"/></svg></div>
<div style="left:886px;top:317.9px;width:10px;height:9.6px"><svg width="10" height="9.6" viewBox="0 0 10 9.6"><path d="M2.1 0 H6.9 L9 1.7 V3.5 H5.1 V2.6 H3.8 V7.1 H5.1 V6.0 H9.3 V7.9 L7.3 9.6 H2.1 L0 7.7 V1.9 Z" fill="#000"/></svg></div>
<div style="left:167.8px;top:351px;width:740px;height:1px;background:#ececec"></div>
<div style="left:167.8px;top:352px;width:740px;height:1px;background:#d8d8d8"></div>
<div class="t " style="left:171.6px;top:338.6px;font-size:10.2px;color:#141414;-webkit-text-stroke:0.2px #141414">COW8C</div>
<div class="t " style="left:261.0px;top:338.6px;font-size:10.2px;color:#4a6fa8;-webkit-text-stroke:0.2px #4a6fa8">AZ</div>
<div class="t " style="left:315.4px;top:338.6px;font-size:10.2px;color:#141414;-webkit-text-stroke:0.2px #141414">C</div>
<div class="t " style="left:369.6px;top:338.6px;font-size:10.2px;color:#141414;-webkit-text-stroke:0.2px #141414">One-Way</div>
<div class="t " style="left:442.8px;top:338.6px;font-size:10.2px;color:#141414;-webkit-text-stroke:0.2px #141414">4152(SEK)</div>
<div class="t " style="left:522.8px;top:338.6px;font-size:10.2px;color:#141414;-webkit-text-stroke:0.2px #141414">B</div>
<div style="left:838px;top:337px;width:11px;height:11px"><svg width="11" height="11" viewBox="0 0 11 11"><rect x="0" y="0" width="11" height="11" fill="#000"/><rect x="1.5" y="2" width="8" height="7.6" fill="#f2f2f2"/><rect x="2.5" y="3" width="6" height="1" fill="#1a1a1a"/><rect x="2.5" y="5" width="6" height="1" fill="#1a1a1a"/><rect x="2.5" y="7" width="6" height="1" fill="#1a1a1a"/></svg></div>
<div style="left:861.3px;top:336.9px;width:12px;height:12px"><svg width="12" height="12" viewBox="0 0 12 12"><path d="M2 2.2 L9.6 9.9 M2 7.8 L9.6 4.2" stroke="#666" stroke-width="0.7"/><path d="M2 0 L4.2 2.2 L2 4.4 L-0.2 2.2Z M9.6 7.7 L11.8 9.9 L9.6 12.1 L7.4 9.9Z" fill="#000"/><circle cx="9.6" cy="4.2" r="1.65" fill="#fff" stroke="#000" stroke-width="1"/><circle cx="2" cy="7.8" r="1.65" fill="#fff" stroke="#000" stroke-width="1"/></svg></div>
<div style="left:886px;top:337.7px;width:10px;height:9.6px"><svg width="10" height="9.6" viewBox="0 0 10 9.6"><path d="M2.1 0 H6.9 L9 1.7 V3.5 H5.1 V2.6 H3.8 V7.1 H5.1 V6.0 H9.3 V7.9 L7.3 9.6 H2.1 L0 7.7 V1.9 Z" fill="#000"/></svg></div>
<div style="left:167.8px;top:371px;width:740px;height:1px;background:#ececec"></div>
<div style="left:167.8px;top:372px;width:740px;height:1px;background:#d8d8d8"></div>
<div class="t " style="left:171.6px;top:358.4px;font-size:10.2px;color:#141414;-webkit-text-stroke:0.2px #141414">JOWFL8C</div>
<div class="t " style="left:261.0px;top:358.4px;font-size:10.2px;color:#4a6fa8;-webkit-text-stroke:0.2px #4a6fa8">AZ</div>
<div class="t " style="left:315.4px;top:358.4px;font-size:10.2px;color:#141414;-webkit-text-stroke:0.2px #141414">J</div>
<div class="t " style="left:369.6px;top:358.4px;font-size:10.2px;color:#141414;-webkit-text-stroke:0.2px #141414">One-Way</div>
<div class="t " style="left:442.8px;top:358.4px;font-size:10.2px;color:#141414;-webkit-text-stroke:0.2px #141414">4152(SEK)</div>
<div class="t " style="left:522.8px;top:358.4px;font-size:10.2px;color:#141414;-webkit-text-stroke:0.2px #141414">B</div>
<div style="left:838px;top:357px;width:11px;height:11px"><svg width="11" height="11" viewBox="0 0 11 11"><rect x="0" y="0" width="11" height="11" fill="#000"/><rect x="1.5" y="2" width="8" height="7.6" fill="#f2f2f2"/><rect x="2.5" y="3" width="6" height="1" fill="#1a1a1a"/><rect x="2.5" y="5" width="6" height="1" fill="#1a1a1a"/><rect x="2.5" y="7" width="6" height="1" fill="#1a1a1a"/></svg></div>
<div style="left:861.3px;top:356.7px;width:12px;height:12px"><svg width="12" height="12" viewBox="0 0 12 12"><path d="M2 2.2 L9.6 9.9 M2 7.8 L9.6 4.2" stroke="#666" stroke-width="0.7"/><path d="M2 0 L4.2 2.2 L2 4.4 L-0.2 2.2Z M9.6 7.7 L11.8 9.9 L9.6 12.1 L7.4 9.9Z" fill="#000"/><circle cx="9.6" cy="4.2" r="1.65" fill="#fff" stroke="#000" stroke-width="1"/><circle cx="2" cy="7.8" r="1.65" fill="#fff" stroke="#000" stroke-width="1"/></svg></div>
<div style="left:886px;top:357.5px;width:10px;height:9.6px"><svg width="10" height="9.6" viewBox="0 0 10 9.6"><path d="M2.1 0 H6.9 L9 1.7 V3.5 H5.1 V2.6 H3.8 V7.1 H5.1 V6.0 H9.3 V7.9 L7.3 9.6 H2.1 L0 7.7 V1.9 Z" fill="#000"/></svg></div>
<div style="left:167.8px;top:391px;width:740px;height:1px;background:#ececec"></div>
<div style="left:167.8px;top:392px;width:740px;height:1px;background:#d8d8d8"></div>
<div class="t " style="left:171.6px;top:378.2px;font-size:10.2px;color:#141414;-webkit-text-stroke:0.2px #141414">DOW8C4</div>
<div class="t " style="left:261.0px;top:378.2px;font-size:10.2px;color:#4a6fa8;-webkit-text-stroke:0.2px #4a6fa8">AZ</div>
<div class="t " style="left:315.4px;top:378.2px;font-size:10.2px;color:#141414;-webkit-text-stroke:0.2px #141414">D</div>
<div class="t " style="left:369.6px;top:378.2px;font-size:10.2px;color:#141414;-webkit-text-stroke:0.2px #141414">One-Way</div>
<div class="t " style="left:442.8px;top:378.2px;font-size:10.2px;color:#141414;-webkit-text-stroke:0.2px #141414">4698(SEK)</div>
<div class="t " style="left:522.8px;top:378.2px;font-size:10.2px;color:#141414;-webkit-text-stroke:0.2px #141414">B</div>
<div style="left:838px;top:377px;width:11px;height:11px"><svg width="11" height="11" viewBox="0 0 11 11"><rect x="0" y="0" width="11" height="11" fill="#000"/><rect x="1.5" y="2" width="8" height="7.6" fill="#f2f2f2"/><rect x="2.5" y="3" width="6" height="1" fill="#1a1a1a"/><rect x="2.5" y="5" width="6" height="1" fill="#1a1a1a"/><rect x="2.5" y="7" width="6" height="1" fill="#1a1a1a"/></svg></div>
<div style="left:861.3px;top:376.5px;width:12px;height:12px"><svg width="12" height="12" viewBox="0 0 12 12"><path d="M2 2.2 L9.6 9.9 M2 7.8 L9.6 4.2" stroke="#666" stroke-width="0.7"/><path d="M2 0 L4.2 2.2 L2 4.4 L-0.2 2.2Z M9.6 7.7 L11.8 9.9 L9.6 12.1 L7.4 9.9Z" fill="#000"/><circle cx="9.6" cy="4.2" r="1.65" fill="#fff" stroke="#000" stroke-width="1"/><circle cx="2" cy="7.8" r="1.65" fill="#fff" stroke="#000" stroke-width="1"/></svg></div>
<div style="left:886px;top:377.3px;width:10px;height:9.6px"><svg width="10" height="9.6" viewBox="0 0 10 9.6"><path d="M2.1 0 H6.9 L9 1.7 V3.5 H5.1 V2.6 H3.8 V7.1 H5.1 V6.0 H9.3 V7.9 L7.3 9.6 H2.1 L0 7.7 V1.9 Z" fill="#000"/></svg></div>
<div style="left:167.8px;top:411px;width:740px;height:1px;background:#ececec"></div>
<div style="left:167.8px;top:412px;width:740px;height:1px;background:#d8d8d8"></div>
<div class="t " style="left:171.6px;top:398.0px;font-size:10.2px;color:#141414;-webkit-text-stroke:0.2px #141414">COW8C4</div>
<div class="t " style="left:261.0px;top:398.0px;font-size:10.2px;color:#4a6fa8;-webkit-text-stroke:0.2px #4a6fa8">AZ</div>
<div class="t " style="left:315.4px;top:398.0px;font-size:10.2px;color:#141414;-webkit-text-stroke:0.2px #141414">C</div>
<div class="t " style="left:369.6px;top:398.0px;font-size:10.2px;color:#141414;-webkit-text-stroke:0.2px #141414">One-Way</div>
<div class="t " style="left:442.8px;top:398.0px;font-size:10.2px;color:#141414;-webkit-text-stroke:0.2px #141414">5283(SEK)</div>
<div class="t " style="left:522.8px;top:398.0px;font-size:10.2px;color:#141414;-webkit-text-stroke:0.2px #141414">B</div>
<div style="left:838px;top:396px;width:11px;height:11px"><svg width="11" height="11" viewBox="0 0 11 11"><rect x="0" y="0" width="11" height="11" fill="#000"/><rect x="1.5" y="2" width="8" height="7.6" fill="#f2f2f2"/><rect x="2.5" y="3" width="6" height="1" fill="#1a1a1a"/><rect x="2.5" y="5" width="6" height="1" fill="#1a1a1a"/><rect x="2.5" y="7" width="6" height="1" fill="#1a1a1a"/></svg></div>
<div style="left:861.3px;top:396.3px;width:12px;height:12px"><svg width="12" height="12" viewBox="0 0 12 12"><path d="M2 2.2 L9.6 9.9 M2 7.8 L9.6 4.2" stroke="#666" stroke-width="0.7"/><path d="M2 0 L4.2 2.2 L2 4.4 L-0.2 2.2Z M9.6 7.7 L11.8 9.9 L9.6 12.1 L7.4 9.9Z" fill="#000"/><circle cx="9.6" cy="4.2" r="1.65" fill="#fff" stroke="#000" stroke-width="1"/><circle cx="2" cy="7.8" r="1.65" fill="#fff" stroke="#000" stroke-width="1"/></svg></div>
<div style="left:886px;top:397.1px;width:10px;height:9.6px"><svg width="10" height="9.6" viewBox="0 0 10 9.6"><path d="M2.1 0 H6.9 L9 1.7 V3.5 H5.1 V2.6 H3.8 V7.1 H5.1 V6.0 H9.3 V7.9 L7.3 9.6 H2.1 L0 7.7 V1.9 Z" fill="#000"/></svg></div>
<div style="left:167.8px;top:430px;width:740px;height:1px;background:#ececec"></div>
<div style="left:167.8px;top:431px;width:740px;height:1px;background:#d8d8d8"></div>
<div class="t " style="left:171.6px;top:417.8px;font-size:10.2px;color:#141414;-webkit-text-stroke:0.2px #141414">DRT8C</div>
<div class="t " style="left:261.0px;top:417.8px;font-size:10.2px;color:#4a6fa8;-webkit-text-stroke:0.2px #4a6fa8">AZ</div>
<div class="t " style="left:315.4px;top:417.8px;font-size:10.2px;color:#141414;-webkit-text-stroke:0.2px #141414">D</div>
<div class="t " style="left:369.6px;top:417.8px;font-size:10.2px;color:#141414;-webkit-text-stroke:0.2px #141414">Round-Trip</div>
<div class="t " style="left:442.8px;top:417.8px;font-size:10.2px;color:#141414;-webkit-text-stroke:0.2px #141414">5644(SEK)</div>
<div class="t " style="left:522.8px;top:417.8px;font-size:10.2px;color:#141414;-webkit-text-stroke:0.2px #141414">B</div>
<div class="t " style="left:699.0px;top:417.8px;font-size:10.2px;color:#141414;-webkit-text-stroke:0.2px #141414">-- / 12M</div>
<div style="left:838px;top:416px;width:11px;height:11px"><svg width="11" height="11" viewBox="0 0 11 11"><rect x="0" y="0" width="11" height="11" fill="#000"/><rect x="1.5" y="2" width="8" height="7.6" fill="#f2f2f2"/><rect x="2.5" y="3" width="6" height="1" fill="#1a1a1a"/><rect x="2.5" y="5" width="6" height="1" fill="#1a1a1a"/><rect x="2.5" y="7" width="6" height="1" fill="#1a1a1a"/></svg></div>
<div style="left:861.3px;top:416.1px;width:12px;height:12px"><svg width="12" height="12" viewBox="0 0 12 12"><path d="M2 2.2 L9.6 9.9 M2 7.8 L9.6 4.2" stroke="#666" stroke-width="0.7"/><path d="M2 0 L4.2 2.2 L2 4.4 L-0.2 2.2Z M9.6 7.7 L11.8 9.9 L9.6 12.1 L7.4 9.9Z" fill="#000"/><circle cx="9.6" cy="4.2" r="1.65" fill="#fff" stroke="#000" stroke-width="1"/><circle cx="2" cy="7.8" r="1.65" fill="#fff" stroke="#000" stroke-width="1"/></svg></div>
<div style="left:886px;top:416.9px;width:10px;height:9.6px"><svg width="10" height="9.6" viewBox="0 0 10 9.6"><path d="M2.1 0 H6.9 L9 1.7 V3.5 H5.1 V2.6 H3.8 V7.1 H5.1 V6.0 H9.3 V7.9 L7.3 9.6 H2.1 L0 7.7 V1.9 Z" fill="#000"/></svg></div>
<div style="left:167.8px;top:450px;width:740px;height:1px;background:#ececec"></div>
<div style="left:167.8px;top:451px;width:740px;height:1px;background:#d8d8d8"></div>
<div class="t " style="left:171.6px;top:437.6px;font-size:10.2px;color:#141414;-webkit-text-stroke:0.2px #141414">CRT8C</div>
<div class="t " style="left:261.0px;top:437.6px;font-size:10.2px;color:#4a6fa8;-webkit-text-stroke:0.2px #4a6fa8">AZ</div>
<div class="t " style="left:315.4px;top:437.6px;font-size:10.2px;color:#141414;-webkit-text-stroke:0.2px #141414">C</div>
<div class="t " style="left:369.6px;top:437.6px;font-size:10.2px;color:#141414;-webkit-text-stroke:0.2px #141414">Round-Trip</div>
<div class="t " style="left:442.8px;top:437.6px;font-size:10.2px;color:#141414;-webkit-text-stroke:0.2px #141414">6920(SEK)</div>
<div class="t " style="left:522.8px;top:437.6px;font-size:10.2px;color:#141414;-webkit-text-stroke:0.2px #141414">B</div>
<div class="t " style="left:699.0px;top:437.6px;font-size:10.2px;color:#141414;-webkit-text-stroke:0.2px #141414">-- / 12M</div>
<div style="left:838px;top:436px;width:11px;height:11px"><svg width="11" height="11" viewBox="0 0 11 11"><rect x="0" y="0" width="11" height="11" fill="#000"/><rect x="1.5" y="2" width="8" height="7.6" fill="#f2f2f2"/><rect x="2.5" y="3" width="6" height="1" fill="#1a1a1a"/><rect x="2.5" y="5" width="6" height="1" fill="#1a1a1a"/><rect x="2.5" y="7" width="6" height="1" fill="#1a1a1a"/></svg></div>
<div style="left:861.3px;top:435.9px;width:12px;height:12px"><svg width="12" height="12" viewBox="0 0 12 12"><path d="M2 2.2 L9.6 9.9 M2 7.8 L9.6 4.2" stroke="#666" stroke-width="0.7"/><path d="M2 0 L4.2 2.2 L2 4.4 L-0.2 2.2Z M9.6 7.7 L11.8 9.9 L9.6 12.1 L7.4 9.9Z" fill="#000"/><circle cx="9.6" cy="4.2" r="1.65" fill="#fff" stroke="#000" stroke-width="1"/><circle cx="2" cy="7.8" r="1.65" fill="#fff" stroke="#000" stroke-width="1"/></svg></div>
<div style="left:886px;top:436.7px;width:10px;height:9.6px"><svg width="10" height="9.6" viewBox="0 0 10 9.6"><path d="M2.1 0 H6.9 L9 1.7 V3.5 H5.1 V2.6 H3.8 V7.1 H5.1 V6.0 H9.3 V7.9 L7.3 9.6 H2.1 L0 7.7 V1.9 Z" fill="#000"/></svg></div>
<div style="left:167.8px;top:470px;width:740px;height:1px;background:#ececec"></div>
<div style="left:167.8px;top:471px;width:740px;height:1px;background:#d8d8d8"></div>
<div class="t " style="left:171.6px;top:457.4px;font-size:10.2px;color:#141414;-webkit-text-stroke:0.2px #141414">JRTFL8C</div>
<div class="t " style="left:261.0px;top:457.4px;font-size:10.2px;color:#4a6fa8;-webkit-text-stroke:0.2px #4a6fa8">AZ</div>
<div class="t " style="left:315.4px;top:457.4px;font-size:10.2px;color:#141414;-webkit-text-stroke:0.2px #141414">J</div>
<div class="t " style="left:369.6px;top:457.4px;font-size:10.2px;color:#141414;-webkit-text-stroke:0.2px #141414">Round-Trip</div>
<div class="t " style="left:442.8px;top:457.4px;font-size:10.2px;color:#141414;-webkit-text-stroke:0.2px #141414">6920(SEK)</div>
<div class="t " style="left:522.8px;top:457.4px;font-size:10.2px;color:#141414;-webkit-text-stroke:0.2px #141414">B</div>
<div style="left:838px;top:456px;width:11px;height:11px"><svg width="11" height="11" viewBox="0 0 11 11"><rect x="0" y="0" width="11" height="11" fill="#000"/><rect x="1.5" y="2" width="8" height="7.6" fill="#f2f2f2"/><rect x="2.5" y="3" width="6" height="1" fill="#1a1a1a"/><rect x="2.5" y="5" width="6" height="1" fill="#1a1a1a"/><rect x="2.5" y="7" width="6" height="1" fill="#1a1a1a"/></svg></div>
<div style="left:861.3px;top:455.7px;width:12px;height:12px"><svg width="12" height="12" viewBox="0 0 12 12"><path d="M2 2.2 L9.6 9.9 M2 7.8 L9.6 4.2" stroke="#666" stroke-width="0.7"/><path d="M2 0 L4.2 2.2 L2 4.4 L-0.2 2.2Z M9.6 7.7 L11.8 9.9 L9.6 12.1 L7.4 9.9Z" fill="#000"/><circle cx="9.6" cy="4.2" r="1.65" fill="#fff" stroke="#000" stroke-width="1"/><circle cx="2" cy="7.8" r="1.65" fill="#fff" stroke="#000" stroke-width="1"/></svg></div>
<div style="left:886px;top:456.5px;width:10px;height:9.6px"><svg width="10" height="9.6" viewBox="0 0 10 9.6"><path d="M2.1 0 H6.9 L9 1.7 V3.5 H5.1 V2.6 H3.8 V7.1 H5.1 V6.0 H9.3 V7.9 L7.3 9.6 H2.1 L0 7.7 V1.9 Z" fill="#000"/></svg></div>
<div style="left:167.8px;top:490px;width:740px;height:1px;background:#ececec"></div>
<div style="left:167.8px;top:491px;width:740px;height:1px;background:#d8d8d8"></div>
<div class="t " style="left:171.6px;top:477.2px;font-size:10.2px;color:#141414;-webkit-text-stroke:0.2px #141414">DRT8C4</div>
<div class="t " style="left:261.0px;top:477.2px;font-size:10.2px;color:#4a6fa8;-webkit-text-stroke:0.2px #4a6fa8">AZ</div>
<div class="t " style="left:315.4px;top:477.2px;font-size:10.2px;color:#141414;-webkit-text-stroke:0.2px #141414">D</div>
<div class="t " style="left:369.6px;top:477.2px;font-size:10.2px;color:#141414;-webkit-text-stroke:0.2px #141414">Round-Trip</div>
<div class="t " style="left:442.8px;top:477.2px;font-size:10.2px;color:#141414;-webkit-text-stroke:0.2px #141414">7564(SEK)</div>
<div class="t " style="left:522.8px;top:477.2px;font-size:10.2px;color:#141414;-webkit-text-stroke:0.2px #141414">B</div>
<div class="t " style="left:699.0px;top:477.2px;font-size:10.2px;color:#141414;-webkit-text-stroke:0.2px #141414">-- / 12M</div>
<div style="left:838px;top:476px;width:11px;height:11px"><svg width="11" height="11" viewBox="0 0 11 11"><rect x="0" y="0" width="11" height="11" fill="#000"/><rect x="1.5" y="2" width="8" height="7.6" fill="#f2f2f2"/><rect x="2.5" y="3" width="6" height="1" fill="#1a1a1a"/><rect x="2.5" y="5" width="6" height="1" fill="#1a1a1a"/><rect x="2.5" y="7" width="6" height="1" fill="#1a1a1a"/></svg></div>
<div style="left:861.3px;top:475.5px;width:12px;height:12px"><svg width="12" height="12" viewBox="0 0 12 12"><path d="M2 2.2 L9.6 9.9 M2 7.8 L9.6 4.2" stroke="#666" stroke-width="0.7"/><path d="M2 0 L4.2 2.2 L2 4.4 L-0.2 2.2Z M9.6 7.7 L11.8 9.9 L9.6 12.1 L7.4 9.9Z" fill="#000"/><circle cx="9.6" cy="4.2" r="1.65" fill="#fff" stroke="#000" stroke-width="1"/><circle cx="2" cy="7.8" r="1.65" fill="#fff" stroke="#000" stroke-width="1"/></svg></div>
<div style="left:886px;top:476.3px;width:10px;height:9.6px"><svg width="10" height="9.6" viewBox="0 0 10 9.6"><path d="M2.1 0 H6.9 L9 1.7 V3.5 H5.1 V2.6 H3.8 V7.1 H5.1 V6.0 H9.3 V7.9 L7.3 9.6 H2.1 L0 7.7 V1.9 Z" fill="#000"/></svg></div>
<div style="left:167.8px;top:510px;width:740px;height:1px;background:#ececec"></div>
<div style="left:167.8px;top:511px;width:740px;height:1px;background:#d8d8d8"></div>
<div class="t " style="left:171.6px;top:497px;font-size:10.2px;color:#141414;-webkit-text-stroke:0.2px #141414">CRT8C4</div>
<div class="t " style="left:261.0px;top:497px;font-size:10.2px;color:#4a6fa8;-webkit-text-stroke:0.2px #4a6fa8">AZ</div>
<div class="t " style="left:315.4px;top:497px;font-size:10.2px;color:#141414;-webkit-text-stroke:0.2px #141414">C</div>
<div class="t " style="left:369.6px;top:497px;font-size:10.2px;color:#141414;-webkit-text-stroke:0.2px #141414">Round-Trip</div>
<div class="t " style="left:442.8px;top:497px;font-size:10.2px;color:#141414;-webkit-text-stroke:0.2px #141414">8538(SEK)</div>
<div class="t " style="left:522.8px;top:497px;font-size:10.2px;color:#141414;-webkit-text-stroke:0.2px #141414">B</div>
<div class="t " style="left:699.0px;top:497px;font-size:10.2px;color:#141414;-webkit-text-stroke:0.2px #141414">-- / 12M</div>
<div style="left:838px;top:496px;width:11px;height:11px"><svg width="11" height="11" viewBox="0 0 11 11"><rect x="0" y="0" width="11" height="11" fill="#000"/><rect x="1.5" y="2" width="8" height="7.6" fill="#f2f2f2"/><rect x="2.5" y="3" width="6" height="1" fill="#1a1a1a"/><rect x="2.5" y="5" width="6" height="1" fill="#1a1a1a"/><rect x="2.5" y="7" width="6" height="1" fill="#1a1a1a"/></svg></div>
<div style="left:861.3px;top:495.3px;width:12px;height:12px"><svg width="12" height="12" viewBox="0 0 12 12"><path d="M2 2.2 L9.6 9.9 M2 7.8 L9.6 4.2" stroke="#666" stroke-width="0.7"/><path d="M2 0 L4.2 2.2 L2 4.4 L-0.2 2.2Z M9.6 7.7 L11.8 9.9 L9.6 12.1 L7.4 9.9Z" fill="#000"/><circle cx="9.6" cy="4.2" r="1.65" fill="#fff" stroke="#000" stroke-width="1"/><circle cx="2" cy="7.8" r="1.65" fill="#fff" stroke="#000" stroke-width="1"/></svg></div>
<div style="left:886px;top:496.1px;width:10px;height:9.6px"><svg width="10" height="9.6" viewBox="0 0 10 9.6"><path d="M2.1 0 H6.9 L9 1.7 V3.5 H5.1 V2.6 H3.8 V7.1 H5.1 V6.0 H9.3 V7.9 L7.3 9.6 H2.1 L0 7.7 V1.9 Z" fill="#000"/></svg></div>
<div style="left:167.8px;top:529px;width:740px;height:1px;background:#ececec"></div>
<div style="left:167.8px;top:530px;width:740px;height:1px;background:#d8d8d8"></div>
<div class="t " style="left:171.6px;top:516.8px;font-size:10.2px;color:#141414;-webkit-text-stroke:0.2px #141414">CIF</div>
<div class="t " style="left:261.0px;top:516.8px;font-size:10.2px;color:#5b8fcf;-webkit-text-stroke:0.2px #5b8fcf">YY</div>
<div class="t " style="left:315.4px;top:516.8px;font-size:10.2px;color:#141414;-webkit-text-stroke:0.2px #141414">C</div>
<div class="t " style="left:369.6px;top:516.8px;font-size:10.2px;color:#141414;-webkit-text-stroke:0.2px #141414">One-Way</div>
<div class="t " style="left:442.8px;top:516.8px;font-size:10.2px;color:#141414;-webkit-text-stroke:0.2px #141414">9679(SEK)</div>
<div class="t " style="left:522.8px;top:516.8px;font-size:10.2px;color:#141414;-webkit-text-stroke:0.2px #141414">B</div>
<div style="left:838px;top:515px;width:11px;height:11px"><svg width="11" height="11" viewBox="0 0 11 11"><rect x="0" y="0" width="11" height="11" fill="#000"/><rect x="1.5" y="2" width="8" height="7.6" fill="#f2f2f2"/><rect x="2.5" y="3" width="6" height="1" fill="#1a1a1a"/><rect x="2.5" y="5" width="6" height="1" fill="#1a1a1a"/><rect x="2.5" y="7" width="6" height="1" fill="#1a1a1a"/></svg></div>
<div style="left:861.3px;top:515.1px;width:12px;height:12px"><svg width="12" height="12" viewBox="0 0 12 12"><path d="M2 2.2 L9.6 9.9 M2 7.8 L9.6 4.2" stroke="#666" stroke-width="0.7"/><path d="M2 0 L4.2 2.2 L2 4.4 L-0.2 2.2Z M9.6 7.7 L11.8 9.9 L9.6 12.1 L7.4 9.9Z" fill="#000"/><circle cx="9.6" cy="4.2" r="1.65" fill="#fff" stroke="#000" stroke-width="1"/><circle cx="2" cy="7.8" r="1.65" fill="#fff" stroke="#000" stroke-width="1"/></svg></div>
<div style="left:886px;top:515.9px;width:10px;height:9.6px"><svg width="10" height="9.6" viewBox="0 0 10 9.6"><path d="M2.1 0 H6.9 L9 1.7 V3.5 H5.1 V2.6 H3.8 V7.1 H5.1 V6.0 H9.3 V7.9 L7.3 9.6 H2.1 L0 7.7 V1.9 Z" fill="#000"/></svg></div>
<div style="left:167.8px;top:549px;width:740px;height:1px;background:#ececec"></div>
<div style="left:167.8px;top:550px;width:740px;height:1px;background:#d8d8d8"></div>
<div class="t " style="left:171.6px;top:536.6px;font-size:10.2px;color:#141414;-webkit-text-stroke:0.2px #141414">CIF</div>
<div class="t " style="left:261.0px;top:536.6px;font-size:10.2px;color:#5b8fcf;-webkit-text-stroke:0.2px #5b8fcf">YY</div>
<div class="t " style="left:315.4px;top:536.6px;font-size:10.2px;color:#141414;-webkit-text-stroke:0.2px #141414">C</div>
<div class="t " style="left:369.6px;top:536.6px;font-size:10.2px;color:#141414;-webkit-text-stroke:0.2px #141414">Round-Trip</div>
<div class="t " style="left:442.8px;top:536.6px;font-size:10.2px;color:#141414;-webkit-text-stroke:0.2px #141414">16131(SEK)</div>
<div class="t " style="left:522.8px;top:536.6px;font-size:10.2px;color:#141414;-webkit-text-stroke:0.2px #141414">B</div>
<div style="left:838px;top:535px;width:11px;height:11px"><svg width="11" height="11" viewBox="0 0 11 11"><rect x="0" y="0" width="11" height="11" fill="#000"/><rect x="1.5" y="2" width="8" height="7.6" fill="#f2f2f2"/><rect x="2.5" y="3" width="6" height="1" fill="#1a1a1a"/><rect x="2.5" y="5" width="6" height="1" fill="#1a1a1a"/><rect x="2.5" y="7" width="6" height="1" fill="#1a1a1a"/></svg></div>
<div style="left:861.3px;top:534.9px;width:12px;height:12px"><svg width="12" height="12" viewBox="0 0 12 12"><path d="M2 2.2 L9.6 9.9 M2 7.8 L9.6 4.2" stroke="#666" stroke-width="0.7"/><path d="M2 0 L4.2 2.2 L2 4.4 L-0.2 2.2Z M9.6 7.7 L11.8 9.9 L9.6 12.1 L7.4 9.9Z" fill="#000"/><circle cx="9.6" cy="4.2" r="1.65" fill="#fff" stroke="#000" stroke-width="1"/><circle cx="2" cy="7.8" r="1.65" fill="#fff" stroke="#000" stroke-width="1"/></svg></div>
<div style="left:886px;top:535.7px;width:10px;height:9.6px"><svg width="10" height="9.6" viewBox="0 0 10 9.6"><path d="M2.1 0 H6.9 L9 1.7 V3.5 H5.1 V2.6 H3.8 V7.1 H5.1 V6.0 H9.3 V7.9 L7.3 9.6 H2.1 L0 7.7 V1.9 Z" fill="#000"/></svg></div>
<div style="left:258px;top:252.8px;width:1px;height:297.0px;background:#d3d3d3"></div>
<div style="left:312px;top:252.8px;width:2px;height:297.0px;background:#e0e0e0"></div>
<div style="left:367px;top:252.8px;width:2px;height:297.0px;background:#e0e0e0"></div>
<div style="left:441px;top:252.8px;width:1px;height:297.0px;background:#d3d3d3"></div>
<div style="left:519px;top:252.8px;width:2px;height:297.0px;background:#e0e0e0"></div>
<div style="left:569px;top:252.8px;width:1px;height:297.0px;background:#d3d3d3"></div>
<div style="left:632px;top:252.8px;width:1px;height:297.0px;background:#d3d3d3"></div>
<div style="left:696px;top:252.8px;width:1px;height:297.0px;background:#d3d3d3"></div>
<div style="left:755px;top:252.8px;width:2px;height:297.0px;background:#e0e0e0"></div>
<div style="left:833px;top:252.8px;width:1px;height:297.0px;background:#d3d3d3"></div>
<div style="left:856px;top:252.8px;width:2px;height:297.0px;background:#e0e0e0"></div>
<div style="left:880px;top:252.8px;width:1px;height:297.0px;background:#d3d3d3"></div>
<div style="left:167px;top:223.2px;width:1px;height:326.6px;background:#cdcdcd"></div>
<div style="left:790.5px;top:107px;width:11px;height:11px"><svg width="11" height="11" viewBox="0 0 11 11"><rect x="0" y="0" width="11" height="11" fill="#000"/><rect x="1.5" y="2" width="8" height="7.6" fill="#f2f2f2"/><rect x="2.5" y="3" width="6" height="1" fill="#1a1a1a"/><rect x="2.5" y="5" width="6" height="1" fill="#1a1a1a"/><rect x="2.5" y="7" width="6" height="1" fill="#1a1a1a"/></svg></div>
<div style="left:790.2px;top:121.6px;width:12px;height:12px"><svg width="12" height="12" viewBox="0 0 12 12"><path d="M2 2.2 L9.6 9.9 M2 7.8 L9.6 4.2" stroke="#666" stroke-width="0.7"/><path d="M2 0 L4.2 2.2 L2 4.4 L-0.2 2.2Z M9.6 7.7 L11.8 9.9 L9.6 12.1 L7.4 9.9Z" fill="#000"/><circle cx="9.6" cy="4.2" r="1.65" fill="#fff" stroke="#000" stroke-width="1"/><circle cx="2" cy="7.8" r="1.65" fill="#fff" stroke="#000" stroke-width="1"/></svg></div>
<div style="left:791.6px;top:138.2px;width:10px;height:9.6px"><svg width="10" height="9.6" viewBox="0 0 10 9.6"><path d="M2.1 0 H6.9 L9 1.7 V3.5 H5.1 V2.6 H3.8 V7.1 H5.1 V6.0 H9.3 V7.9 L7.3 9.6 H2.1 L0 7.7 V1.9 Z" fill="#000"/></svg></div>
</body></html>
